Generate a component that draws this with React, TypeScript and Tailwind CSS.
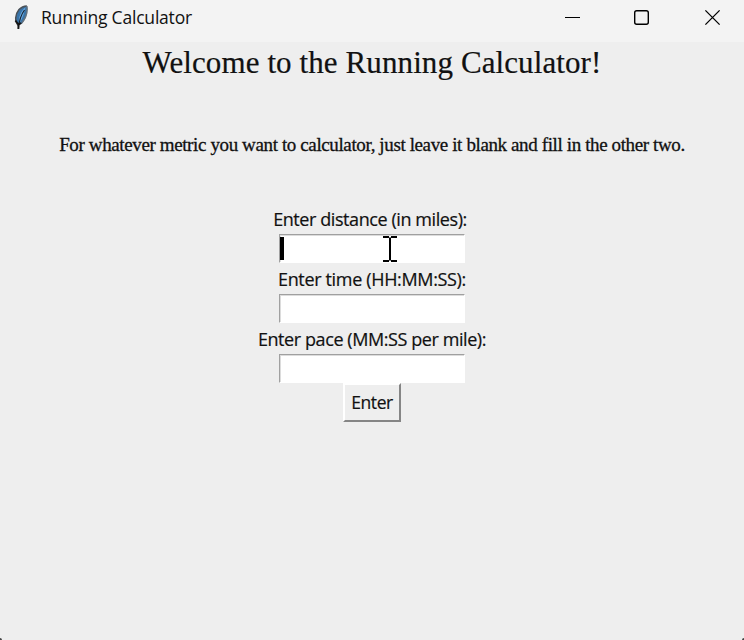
import type { ReactNode } from "react";

function Feather() {
  return (
    <svg className="ml-[13px] h-[25px] w-[16px]" viewBox="0 0 16 25" fill="none">
      <path d="M5.5 20.5C1.8 17 2 9.5 6 4.5C8 2.3 11 1.1 13.9 1C15 6 13.5 13 9.5 18Z" fill="#3873a8" />
      <path d="M6.8 18C4.5 13 8.2 6 12.5 2C11.5 7 10 12 6.8 18Z" fill="#6aaae0" />
      <path d="M5.4 20.5C1.4 16.6 2 9.5 6 4.5C8.2 2.3 11 1.2 13.9 1" stroke="#4a5158" strokeWidth="1.5" />
      <path d="M13.9 1C14.8 6.5 13 13 8.8 18" stroke="#66727c" strokeWidth="1.4" />
      <path d="M5.4 23.5C6 17 8.5 9 11.5 5" stroke="#172330" strokeWidth="1.2" />
      <path d="M2.4 15.5L5.4 19.6L8.4 18M5.4 18V24" stroke="#151515" strokeWidth="1.9" />
    </svg>
  );
}

function TitleBar() {
  return (
    <header className="flex h-[42px] shrink-0 items-start justify-between bg-[#f3f3f3]">
      <div className="flex h-[35px] items-center">
        <Feather />
        <span className="ml-[12px] whitespace-nowrap text-[17.5px] tracking-[-0.2px]">Running Calculator</span>
      </div>
      <svg className="h-[35px] w-[180px]" viewBox="0 0 180 35" fill="none" stroke="#000">
        <path d="M1 17.5H16" />
        <rect x="70.7" y="10.7" width="13.6" height="13.6" rx="2" strokeWidth="1.4" />
        <path d="M141.4 10.4L155.6 24.6M155.6 10.4L141.4 24.6" strokeWidth="1.3" />
      </svg>
    </header>
  );
}

function Field({ label, children }: { label: ReactNode; children?: ReactNode }) {
  return (
    <div className="flex h-[60px] flex-col items-center">
      <div className="flex h-[31px] items-center whitespace-nowrap pt-px text-[18px] [-webkit-text-stroke:0.2px]">{label}</div>
      <div className="relative h-[29px] w-[186px] border border-t-[#a0a0a0] border-r-white border-b-white border-l-[#a0a0a0] bg-white shadow-[inset_1px_1px_0_#dcdcdc]">
        {children}
      </div>
    </div>
  );
}

export default function App() {
  return (
    <main className="relative flex h-[640px] w-[744px] flex-col overflow-hidden bg-[#eeeeee] font-['Open_Sans',sans-serif] text-[#111]">
      <TitleBar />
      <div className="flex flex-col items-center">
        <h1 className="flex h-[42px] items-center whitespace-nowrap font-['Liberation_Serif',serif] text-[31px] tracking-[0.1px] [-webkit-text-stroke:0.2px]">Welcome to the Running Calculator!</h1>
        <p className="mt-[46px] flex h-[30px] items-center whitespace-nowrap font-['Liberation_Serif',serif] text-[19px] tracking-[-0.38px] [-webkit-text-stroke:0.3px]">For whatever metric you want to calculator, just leave it blank and fill in the other two.</p>
        <div className="mt-[43px] flex flex-col items-center">
          <Field label={<span className="-ml-[4px] tracking-[-0.42px]">Enter distance (in miles):</span>}>
            <span className="absolute top-[2px] left-0 h-[23px] w-[4px] bg-black" />
            <svg className="absolute top-px left-[103px] h-[26px] w-[14px]" viewBox="0 0 14 26" fill="none" stroke="#000" strokeWidth="2">
              <path d="M0 1H6M8 1H14M7 1.5V24.5M0 25H6M8 25H14" />
            </svg>
          </Field>
          <Field label={<span className="tracking-[-0.34px]">Enter time (HH:MM:SS):</span>} />
          <Field label={<span className="tracking-[-0.42px]">Enter pace (MM:SS per mile):</span>} />
          <button className="flex h-[39px] w-[58px] items-center justify-center border-2 border-t-white border-r-[#858585] border-b-[#858585] border-l-white bg-[#eeeeee] text-[17.5px] tracking-[-0.4px] [-webkit-text-stroke:0.2px]">Enter</button>
        </div>
      </div>
      <span className="absolute bottom-0 left-0 h-[2px] w-[2px] rounded-tr-full bg-[#444]" />
      <span className="absolute right-0 bottom-0 h-[2px] w-[2px] rounded-tl-full bg-[#444]" />
    </main>
  );
}
